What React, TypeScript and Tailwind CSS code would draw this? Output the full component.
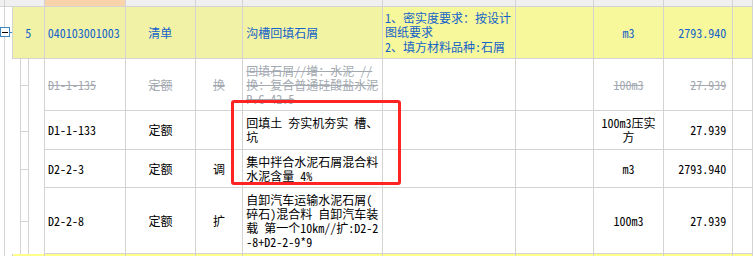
import React from 'react';

const FONT = { fontFamily: '"Noto Sans Mono CJK SC", "Noto Sans CJK SC", monospace' };

type Row = {
  h: string;
  code: string;
  kind: string;
  flag: string;
  name: string[];
  unit: string[];
  qty: string;
  tone: 'gray' | 'black';
};

const rows: Row[] = [
  {
    h: 'h-[52px]',
    code: 'D1-1-135',
    kind: '定额',
    flag: '换',
    name: ['回填石屑//增：水泥 //', '换：复合普通硅酸盐水泥', 'P.C 42.5'],
    unit: ['100m3'],
    qty: '27.939',
    tone: 'gray',
  },
  {
    h: 'h-[39px]',
    code: 'D1-1-133',
    kind: '定额',
    flag: '',
    name: ['回填土 夯实机夯实 槽、', '坑'],
    unit: ['100m3压实', '方'],
    qty: '27.939',
    tone: 'black',
  },
  {
    h: 'h-[38px]',
    code: 'D2-2-3',
    kind: '定额',
    flag: '调',
    name: ['集中拌合水泥石屑混合料', '水泥含量 4%'],
    unit: ['m3'],
    qty: '2793.940',
    tone: 'black',
  },
  {
    h: 'h-[66px]',
    code: 'D2-2-8',
    kind: '定额',
    flag: '扩',
    name: ['自卸汽车运输水泥石屑(', '碎石)混合料 自卸汽车装', '载 第一个10km//扩:D2-2', '-8+D2-2-9*9'],
    unit: ['100m3'],
    qty: '27.939',
    tone: 'black',
  },
];

const cell = 'border-r border-b border-[#d3d3d3] flex items-center';

function Lines({ lines }: { lines: string[] }) {
  return (
    <div className="leading-[14px] whitespace-nowrap">
      {lines.map((l, i) => (
        <div key={i}>{l}</div>
      ))}
    </div>
  );
}

function SubRow({ r }: { r: Row }) {
  const txt = r.tone === 'gray' ? 'text-[#a3a9b0] line-through' : 'text-black';
  return (
    <div className={`flex ${r.h} ${txt}`}>
      <div className="w-[12px] shrink-0 flex justify-start">
        <div className="ml-[4px] w-px h-full bg-[#d3d3d3]" />
      </div>
      <div className="w-[33px] shrink-0 border-r border-[#d3d3d3] relative">
        <div className="absolute left-[8px] top-0 h-full w-px bg-[#d3d3d3]" />
        <div className="absolute left-[16px] top-0 h-full w-px bg-[#d3d3d3]" />
        <div className="absolute left-[8px] top-1/2 w-[8px] h-px bg-[#d3d3d3]" />
      </div>
      <div className={`${cell} w-[82px] pl-[3px]`}>{r.code}</div>
      <div className={`${cell} w-[70px] justify-center`}>{r.kind}</div>
      <div className={`${cell} w-[48px] justify-center`}>{r.flag}</div>
      <div className={`${cell} w-[141px] pl-[3px] overflow-hidden`}>
        <Lines lines={r.name} />
      </div>
      <div className={`${cell} w-[134px]`} />
      <div className={`${cell} w-[79px]`} />
      <div className={`${cell} w-[70px] justify-center text-center`}>
        <Lines lines={r.unit} />
      </div>
      <div className={`${cell} w-[70px] justify-end pr-[6px]`}>{r.qty}</div>
      <div className={`${cell} w-[20px]`} />
    </div>
  );
}

export default function App() {
  return (
    <div className="w-[753px] h-[256px] overflow-hidden bg-white relative text-[12px]" style={FONT}>
      {/* header strip */}
      <div className="flex h-[7px]">
        <div className="w-[12px] shrink-0 bg-[#f0f0f0] border-b border-[#d3d3d3] flex">
          <div className="ml-[4px] w-px h-full bg-[#d3d3d3]" />
        </div>
        <div className="w-[33px] bg-[#f0f0f0] border-r border-b border-[#d3d3d3]" />
        <div className="w-[82px] bg-[#f9d3a9] border-r border-b border-[#d3d3d3]" />
        <div className="w-[70px] bg-[#f0f0f0] border-r border-b border-[#d3d3d3]" />
        <div className="w-[48px] bg-[#f0f0f0] border-r border-b border-[#d3d3d3]" />
        <div className="w-[141px] bg-[#f0f0f0] border-r border-b border-[#d3d3d3]" />
        <div className="w-[134px] bg-[#f0f0f0] border-r border-b border-[#d3d3d3]" />
        <div className="w-[79px] bg-[#f0f0f0] border-r border-b border-[#d3d3d3]" />
        <div className="w-[70px] bg-[#f0f0f0] border-r border-b border-[#d3d3d3]" />
        <div className="w-[70px] bg-[#f0f0f0] border-r border-b border-[#d3d3d3]" />
        <div className="w-[20px] bg-[#f0f0f0] border-r border-b border-[#d3d3d3]" />
      </div>

      {/* list row */}
      <div className="flex h-[52px] text-[#1463c9]">
        <div className="w-[12px] shrink-0 relative">
          <div className="absolute left-[4px] top-0 h-full w-px bg-[#d3d3d3]" />
          <div className="absolute left-[9px] top-[25px] w-[3px] h-px bg-[#3b86c4]" />
          <div className="absolute left-0 top-[20px] w-[10px] h-[10px] border border-[#3b86c4] bg-white flex items-center justify-center">
            <div className="w-[6px] h-px bg-black" />
          </div>
        </div>
        <div className={`${cell} w-[33px] border-l bg-[#f2f2a6] justify-center`}>5</div>
        <div className={`${cell} w-[82px] bg-[#f2f2a6] pl-[3px]`}>040103001003</div>
        <div className={`${cell} w-[70px] bg-[#f2f2a6] justify-center`}>清单</div>
        <div className={`${cell} w-[48px] bg-[#f2f2a6]`} />
        <div className={`${cell} w-[141px] bg-[#f3f3a4] pl-[3px]`}>沟槽回填石屑</div>
        <div className={`${cell} w-[134px] bg-[#f7f79b] pl-[2px]`}>
          <div className="leading-[14.5px]">
            <div>1、密实度要求：按设计</div>
            <div>图纸要求</div>
            <div>2、填方材料品种:石屑</div>
          </div>
        </div>
        <div className={`${cell} w-[79px] bg-[#f7f79b]`} />
        <div className={`${cell} w-[70px] bg-[#f7f79b] justify-center`}>m3</div>
        <div className={`${cell} w-[70px] bg-[#f7f79b] justify-end pr-[6px]`}>2793.940</div>
        <div className={`${cell} w-[20px] bg-[#f7f79b]`} />
      </div>

      {rows.map((r) => (
        <SubRow key={r.code} r={r} />
      ))}

      {/* next list row, mostly cut off */}
      <div className="flex h-[10px]">
        <div className="w-[12px] shrink-0 flex">
          <div className="ml-[4px] w-px h-full bg-[#d3d3d3]" />
        </div>
        <div className="w-[33px] border-l border-r border-[#d3d3d3] bg-[#ffff8c]" />
        <div className="w-[82px] border-r border-[#d3d3d3] bg-[#ffff8c]" />
        <div className="w-[70px] border-r border-[#d3d3d3] bg-[#ffff8c]" />
        <div className="w-[48px] border-r border-[#d3d3d3] bg-[#ffff8c]" />
        <div className="w-[141px] border-r border-[#d3d3d3] bg-[#ffff8c]" />
        <div className="w-[134px] border-r border-[#d3d3d3] bg-[#ffff8c]" />
        <div className="w-[79px] border-r border-[#d3d3d3] bg-[#ffff8c]" />
        <div className="w-[70px] border-r border-[#d3d3d3] bg-[#ffff8c]" />
        <div className="w-[70px] border-r border-[#d3d3d3] bg-[#ffff8c]" />
        <div className="w-[20px] border-r border-[#d3d3d3] bg-[#ffff8c]" />
      </div>

      {/* red annotation box */}
      <div className="absolute left-[231px] top-[100px] w-[170px] h-[85px] border-[3px] border-[#ff2323] rounded-[3px]" />
    </div>
  );
}
